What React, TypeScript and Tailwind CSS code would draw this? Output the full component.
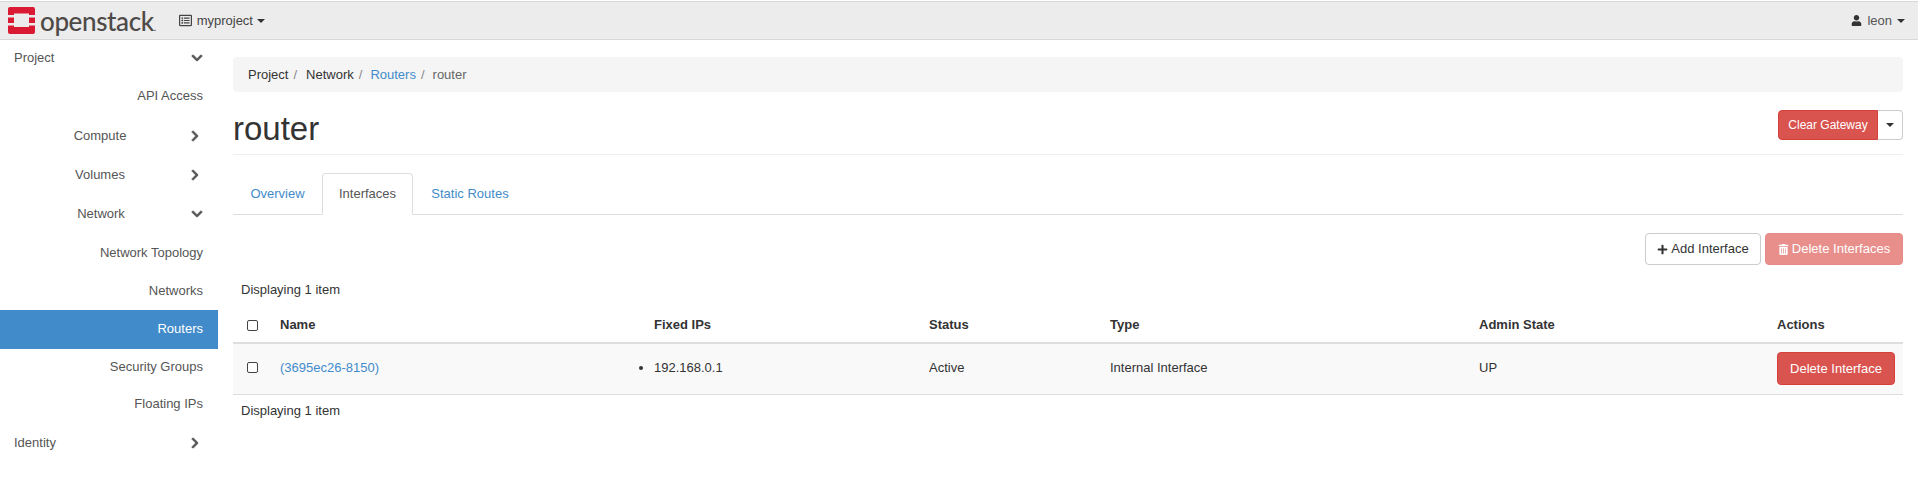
import React from "react";
import { FaChevronDown, FaChevronRight, FaPlus, FaTrashAlt, FaUser, FaRegListAlt } from "react-icons/fa";

// caret dei dropdown
function Caret({ className = "" }: { className?: string }) {
    return <span className={`inline-block border-x-[4px] border-t-[4px] border-x-transparent border-t-current ${className}`} />;
}

function Logo() {
    return (
        <svg width="27" height="27" viewBox="0 0 27 27" className="shrink-0">
            <path
                fill="#da1a32"
                d="M2 0H25A2 2 0 0 1 27 2V8H21V6.5H6V8H0V2A2 2 0 0 1 2 0ZM0 10.5H6V16H0ZM21 10.5H27V16H21ZM0 18.5H6V20H21V18.5H27V25A2 2 0 0 1 25 27H2A2 2 0 0 1 0 25Z"
            />
        </svg>
    );
}

interface NavItem {
    label: string;
    level: number;
    open?: boolean;
    active?: boolean;
    h: string;
}

const nav: NavItem[] = [
    { label: "Project", level: 0, open: true, h: "h-[36px]" },
    { label: "API Access", level: 2, h: "h-[40px]" },
    { label: "Compute", level: 1, open: false, h: "h-[39px]" },
    { label: "Volumes", level: 1, open: false, h: "h-[39px]" },
    { label: "Network", level: 1, open: true, h: "h-[40px]" },
    { label: "Network Topology", level: 2, h: "h-[38px]" },
    { label: "Networks", level: 2, h: "h-[38px]" },
    { label: "Routers", level: 2, active: true, h: "h-[39px]" },
    { label: "Security Groups", level: 2, h: "h-[36px]" },
    { label: "Floating IPs", level: 2, h: "h-[37px]" },
    { label: "Identity", level: 0, open: false, h: "h-[41px]" },
];

function Sidebar() {
    return (
        <div className="w-[218px] shrink-0">
            {nav.map((item) => (
                <div
                    key={item.label}
                    className={`${item.h} flex items-center pr-[15px] ${item.active ? "bg-[#428bca] text-white" : "text-[#555]"}`}
                >
                    {item.level === 0 && <span className="pl-[14px] flex-1">{item.label}</span>}
                    {item.level === 1 && <span className="flex-1 text-center pl-[11px]">{item.label}</span>}
                    {item.level === 2 && <span className={`flex-1 text-right ${item.active ? "-mt-[2px]" : ""}`}>{item.label}</span>}
                    {item.open === true && <FaChevronDown className="text-[12px] stroke-[30]" />}
                    {item.open === false && <FaChevronRight className="text-[12px] mr-[2px] stroke-[30]" />}
                </div>
            ))}
        </div>
    );
}

const widths = ["w-[39px]", "w-[374px]", "w-[275px]", "w-[181px]", "w-[369px]", "w-[298px]", "w-[134px]"];
const heads = ["Name", "Fixed IPs", "Status", "Type", "Admin State", "Actions"];

function Checkbox() {
    return <span className="block w-[11px] h-[11px] ml-[6px] rounded-[2px] border border-[#444] bg-white" />;
}

function InterfacesTable() {
    return (
        <table className="w-full table-fixed border-collapse">
            <thead>
                <tr className="h-[43px]">
                    <th className={`${widths[0]} px-2 pt-[8px]`}><Checkbox /></th>
                    {heads.map((h, idx) => (
                        <th key={h} className={`${widths[idx + 1]} px-2 pt-[8px] text-left font-bold`}>{h}</th>
                    ))}
                </tr>
            </thead>
            <tbody>
                <tr className="h-[51px] bg-[#f9f9f9] border-t-[2px] border-b border-t-[#ddd] border-b-[#ddd]">
                    <td className="px-2 pb-[2px]"><Checkbox /></td>
                    <td className="px-2 pb-[2px] text-[#428bca]">(3695ec26-8150)</td>
                    <td className="px-2 pb-[2px]">
                        <ul className="list-disc"><li>192.168.0.1</li></ul>
                    </td>
                    <td className="px-2 pb-[2px]">Active</td>
                    <td className="px-2 pb-[2px]">Internal Interface</td>
                    <td className="px-2 pb-[2px]">UP</td>
                    <td className="px-2">
                        <button className="w-[118px] h-[33px] bg-[#d9534f] border border-[#d43f3a] rounded-[4px] text-white">Delete Interface</button>
                    </td>
                </tr>
            </tbody>
        </table>
    );
}

export default function App() {
    return (
        <div className="w-[1918px] h-[501px] bg-white overflow-hidden text-[13px] text-[#333] font-['Liberation_Sans',Arial,sans-serif]">
            <div className="h-[39px] mt-[1px] bg-[#ececec] border-y border-y-[#d8d8d8] flex items-center pl-[8px] pr-[13px]">
                <Logo />
                <span className="ml-[5px] text-[26px] leading-none tracking-[-0.4px] font-medium text-[#4d4a48] font-['Lato',sans-serif]">openstack<span className="text-[10px]">.</span></span>
                <FaRegListAlt className="ml-[23px] text-[13px] text-[#444]" />
                <span className="ml-[5px] text-[#444]">myproject</span>
                <Caret className="ml-[4px] text-[#333]" />
                <span className="flex-1" />
                <FaUser className="text-[11px] text-[#333]" />
                <span className="ml-[5px] text-[#555]">leon</span>
                <Caret className="ml-[5px] text-[#333]" />
            </div>
            <div className="flex">
                <Sidebar />
                <div className="w-[1670px] ml-[15px]">
                    <div className="mt-[17px] h-[35px] bg-[#f5f5f5] rounded-[4px] flex items-center pl-[15px]">
                        <span>Project</span>
                        <span className="ml-[5px] text-[#888]">/</span>
                        <span className="ml-[9px]">Network</span>
                        <span className="ml-[5px] text-[#888]">/</span>
                        <span className="ml-[8px] text-[#428bca]">Routers</span>
                        <span className="ml-[5px] text-[#888]">/</span>
                        <span className="ml-[8px] text-[#666]">router</span>
                    </div>
                    <div className="h-[63px] border-b border-b-[#eee] flex items-center justify-between">
                        <h1 className="text-[33px] leading-none mt-[10px]">router</h1>
                        <div className="flex h-[30px] mt-[3px]">
                            <button className="w-[100px] bg-[#d9534f] border border-[#d43f3a] rounded-l-[4px] text-white text-[12px]">Clear Gateway</button>
                            <button className="w-[25px] bg-white border border-l-0 border-[#ccc] rounded-r-[4px] flex items-center justify-center"><Caret /></button>
                        </div>
                    </div>
                    <div className="mt-[18px] h-[42px] border-b border-b-[#ddd] flex">
                        <span className="w-[89px] h-[41px] flex items-center justify-center text-[#428bca]">Overview</span>
                        <span className="w-[91px] h-[42px] flex items-center justify-center bg-white border border-[#ddd] border-b-white rounded-t-[4px] text-[#555]">Interfaces</span>
                        <span className="w-[114px] h-[41px] flex items-center justify-center text-[#428bca]">Static Routes</span>
                    </div>
                    <div className="mt-[18px] flex justify-end gap-[4px]">
                        <button className="w-[116px] h-[32px] bg-white border border-[#ccc] rounded-[4px] flex items-center justify-center">
                            <FaPlus className="text-[11px] mr-[3px]" />Add Interface
                        </button>
                        <button className="w-[138px] h-[32px] bg-[#e88f8c] border border-[#e58a87] rounded-[4px] text-white flex items-center justify-center">
                            <FaTrashAlt className="text-[11px] mr-[3px]" />Delete Interfaces
                        </button>
                    </div>
                    <div className="h-[21px] pl-[8px] mt-[14px] flex items-center">Displaying 1 item</div>
                    <InterfacesTable />
                    <div className="h-[32px] pl-[8px] flex items-center">Displaying 1 item</div>
                </div>
            </div>
        </div>
    );
}
